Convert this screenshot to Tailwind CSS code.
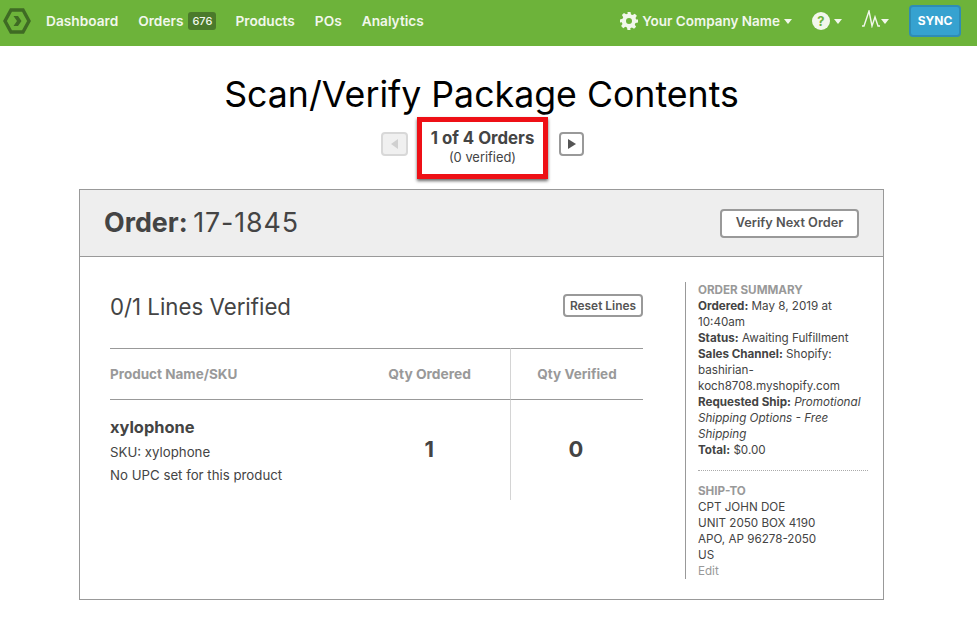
<!DOCTYPE html>
<html lang="en">
<head>
    <meta charset="utf-8">
    <title>Scan/Verify Package Contents</title>
    <script src="https://cdn.jsdelivr.net/npm/@tailwindcss/browser@4"></script>
</head>
<body class="bg-white font-['Inter',sans-serif] text-[#444] overflow-hidden">

    <nav class="h-[46px] bg-[#6db33a] flex items-center pl-[3px] pr-[16px] pb-[4px] text-[13.700px] font-semibold text-[#f2f7ec]">
        <svg class="w-[28px] h-[26px]" viewBox="0 0 28 26" fill="none">
            <path d="M8 2h12l6 11-6 11H8L2 13z" stroke="#3f6b24" stroke-width="3.4"/>
            <path d="M10.500 8h4.500l3.500 5-3.500 5h-4.500l3.500-5z" fill="#3f6b24"/>
        </svg>
        <a class="ml-[15px]">Dashboard</a>
        <a class="ml-[20px]">Orders</a>
        <span class="ml-[5px] px-[4px] h-[18px] leading-[18px] rounded-[3px] bg-[#4b7a2b] text-[11px] font-medium">676</span>
        <a class="ml-[19px]">Products</a>
        <a class="ml-[20px]">POs</a>
        <a class="ml-[20px]">Analytics</a>

        <svg class="ml-auto w-[18px] h-[18px]" viewBox="0 0 24 24" fill="#f2f7ec">
            <path fill-rule="evenodd" d="M10 0h4l.7 3.200 2.200.9 2.800-1.800 2.800 2.800-1.800 2.800.9 2.200L24 10v4l-3.400.7-.9 2.200 1.800 2.800-2.800 2.800-2.800-1.800-2.200.9L14 24h-4l-.7-3.400-2.200-.9-2.800 1.800-2.800-2.800 1.800-2.800-.9-2.200L0 14v-4l3.400-.9.9-2.200-1.800-2.800 2.800-2.800 2.800 1.800 2.200-.9zM12 8a4 4 0 1 0 0 8 4 4 0 0 0 0-8z"/>
        </svg>
        <span class="ml-[4px] text-[13.500px]">Your Company Name</span>
        <span class="ml-[4px] w-0 h-0 border-x-[4.500px] border-x-transparent border-t-[5px] border-t-[#f2f7ec]"></span>
        <span class="ml-[20px] w-[18px] h-[18px] rounded-full bg-[#f2f7ec] text-[#6db33a] text-[13px] font-bold leading-[18px] text-center">?</span>
        <span class="ml-[4px] w-0 h-0 border-x-[4.500px] border-x-transparent border-t-[5px] border-t-[#f2f7ec]"></span>
        <svg class="ml-[20px] mt-[-4px] w-[20px] h-[18px]" viewBox="0 0 20 18" fill="none" stroke="#f2f7ec" stroke-width="1.400">
            <path d="M0 16h2L7 1l3 15 3-9 3 9h2"/>
        </svg>
        <span class="ml-[-1px] w-0 h-0 border-x-[4.500px] border-x-transparent border-t-[5px] border-t-[#f2f7ec]"></span>
        <button class="ml-[20px] w-[52px] h-[32px] rounded-[4px] bg-[#36a2d0] border-2 border-[#2f8cb5] text-white text-[12px] font-bold">SYNC</button>
    </nav>

    <main class="w-[963px] flex flex-col items-center">
        <h1 class="mt-[24px] text-[35.700px] leading-[48px] font-normal text-black">Scan/Verify Package Contents</h1>

        <div class="mt-[-1px] ml-[2px] h-[62px] flex items-start">
            <button class="mt-[15px] w-[27px] h-[24px] rounded-[4px] border-2 border-[#d8d8d8] bg-[#f0f0f0] flex items-center justify-center">
                <span class="w-0 h-0 border-y-[5px] border-y-transparent border-r-[7px] border-r-[#d0d0d0]"></span>
            </button>
            <div class="ml-[9px] mr-[11px] w-[131px] h-[62px] pb-[2px] border-[5px] border-[#ee1016] shadow-[0_2px_3px_rgba(0,0,0,0.6)] flex flex-col items-center justify-center">
                <div class="text-[16.800px] leading-[22px] font-bold">1 of 4 Orders</div>
                <div class="text-[12.900px] leading-[18px]">(0 verified)</div>
            </div>
            <button class="mt-[15px] w-[25px] h-[24px] rounded-[4px] border-2 border-[#999] flex items-center justify-center">
                <span class="w-0 h-0 border-y-[5px] border-y-transparent border-l-[8px] border-l-[#555]"></span>
            </button>
        </div>

        <section class="mt-[10px] w-[805px] h-[411px] border border-[#999]">
            <header class="h-[67px] bg-[#eeeeee] border-b border-[#999] flex items-center justify-between pl-[24px] pr-[24px]">
                <h2 class="pb-[2px] text-[26.800px]"><b>Order:</b> <span class="ml-[-2px] tracking-[0.9px]">17-1845</span></h2>
                <button class="w-[139px] h-[29px] rounded-[4px] border-2 border-[#999] bg-white text-[12.750px] font-semibold text-[#555]">Verify Next Order</button>
            </header>

            <div class="flex pl-[30px] pt-[24px]">
                <div class="w-[533px]">
                    <div class="h-[67px] flex items-start justify-between">
                        <h3 class="mt-[11px] text-[22.250px] leading-[30px]">0/1 Lines Verified</h3>
                        <button class="mt-[13px] w-[80px] h-[23px] rounded-[4px] border-2 border-[#999] text-[11.900px] font-semibold text-[#555]">Reset Lines</button>
                    </div>
                    <div class="grid grid-cols-[400px_133px]">
                        <div class="border-y border-[#999] h-[52px] flex items-center justify-between pr-[39px] text-[13.500px] font-bold text-[#999]">
                            <span>Product Name/SKU</span><span class="text-[13.800px]">Qty Ordered</span>
                        </div>
                        <div class="border-y border-[#999] h-[52px] border-l-[#d4d4d4] border-l flex items-center justify-center text-[13.500px] font-bold text-[#999]">Qty Verified</div>
                        <div class="pt-[17px] flex justify-between pr-[76px]">
                            <div class="text-[13.250px] leading-[23px]">
                                <div class="text-[16.400px] leading-[21px] font-bold">xylophone</div>
                                <div class="mt-[3px]">SKU: xylophone</div>
                                <div>No UPC set for this product</div>
                            </div>
                            <div class="mt-[16px] text-[22px] font-bold">1</div>
                        </div>
                        <div class="h-[100px] border-l border-[#d4d4d4] pt-[33px] pr-[2px] text-center text-[22px] font-bold">0</div>
                    </div>
                </div>

                <aside class="ml-[42px] mt-[1px] w-[183px] h-[297px] border-l border-[#999] pl-[12px] text-[11.650px] leading-[16px]">
                    <div class="font-bold text-[#999] uppercase">Order Summary</div>
                    <div><b>Ordered:</b> May 8, 2019 at 10:40am</div>
                    <div><b>Status:</b> Awaiting Fulfillment</div>
                    <div><b>Sales Channel:</b> Shopify: bashirian-koch8708.myshopify.com</div>
                    <div><b>Requested Ship:</b> <i>Promotional Shipping Options - Free Shipping</i></div>
                    <div><b>Total:</b> $0.00</div>
                    <div class="mt-[12px] mb-[12px] border-t border-dotted border-[#aaa]"></div>
                    <div class="font-bold text-[#999] uppercase">Ship-To</div>
                    <div>CPT JOHN DOE</div>
                    <div>UNIT 2050 BOX 4190</div>
                    <div>APO, AP 96278-2050</div>
                    <div>US</div>
                    <div class="text-[#999]">Edit</div>
                </aside>
            </div>
        </section>
    </main>

</body>
</html>
